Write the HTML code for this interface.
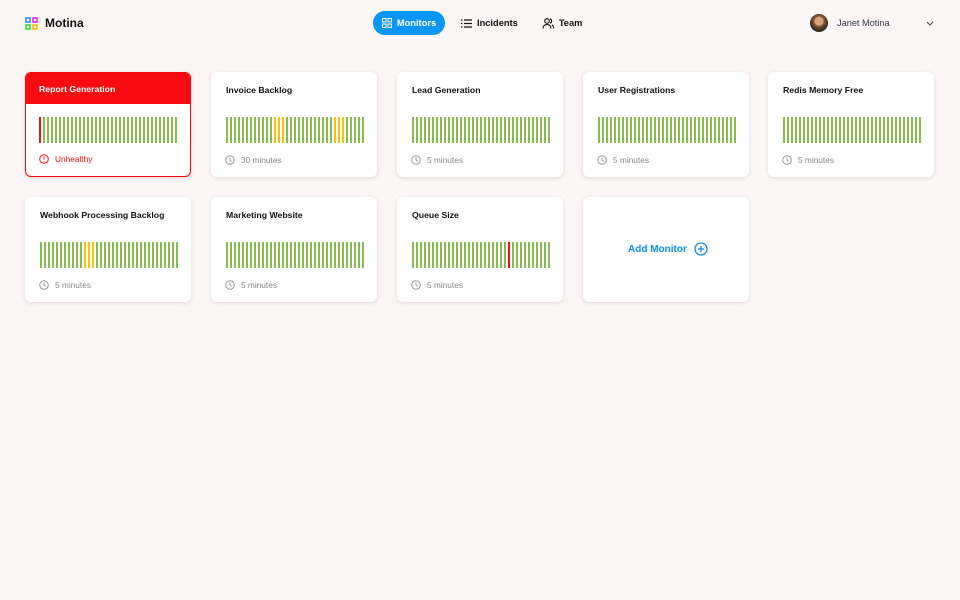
<!DOCTYPE html>
<html><head><meta charset="utf-8"><style>
*{box-sizing:border-box;margin:0;padding:0}
body{width:960px;height:600px;background:#fdf6f6;font-family:"Liberation Sans",sans-serif;position:relative;overflow:hidden;color:#111}
.logo{position:absolute;left:25px;top:16px;display:flex;align-items:center;gap:7px;font-weight:bold;font-size:12px}
.nav{position:absolute;top:11px;left:373px;display:flex;align-items:center;font-size:9.3px;font-weight:bold}
.nav .it{display:flex;align-items:center;gap:5px;height:24px;padding:0 10px;border-radius:12px}
.nav .act{background:#0a96f5;color:#fff;width:72px;justify-content:center;padding:0}
.user{position:absolute;left:810px;top:14px;display:flex;align-items:center;font-size:9.2px;color:#333a4a}
.av{width:18px;height:18px;border-radius:50%;background:radial-gradient(circle at 50% 40%,#d9a27a 0 4px,#8a5a3a 5px,#3a2d22 9px);margin-right:9px}
.card{position:absolute;width:166px;height:105px;background:#fff;border-radius:6px;box-shadow:0 1px 5px rgba(0,0,0,.12)}
.t{position:absolute;left:15px;top:13px;font-size:8.7px;font-weight:bold}
.bars{position:absolute;left:15px;top:45px;width:138px;height:26px;background:repeating-linear-gradient(90deg,#88bb50 0 2px,transparent 2px 4px)}
.bars i{position:absolute;top:0;width:2px;height:26px}
.y{background:#f5c20f}.r{background:#ee1111}
.f{position:absolute;left:14px;top:83px;font-size:8.3px;color:#888;display:flex;align-items:center;gap:6px}
.red{border:1.5px solid #ee0a0a}
.red .hd{position:absolute;left:0;top:0;right:0;height:31px;background:#f70a10;border-radius:5px 5px 0 0}
.red .t{color:#fff;top:11px;left:13px}
.red .bars{left:13px;top:44px}
.red .f{color:#e11;left:13px;top:81px}
</style></head><body>
<div class="logo"><svg width="13" height="13" viewBox="0 0 13 13" fill="none" stroke-width="1.5"><rect x="1" y="1" width="4" height="4" stroke="#1a8cff"/><rect x="8" y="1" width="4" height="4" stroke="#e81ce8"/><rect x="1" y="8" width="4" height="4" stroke="#22dd22"/><rect x="8" y="8" width="4" height="4" stroke="#ffaa00"/></svg>Motina</div>
<div class="nav">
<div class="it act"><svg width="10" height="10" viewBox="0 0 10 10" fill="none" stroke="#fff"><rect x=".5" y=".5" width="3.5" height="3.5"/><rect x="6" y=".5" width="3.5" height="3.5"/><rect x=".5" y="6" width="3.5" height="3.5"/><rect x="6" y="6" width="3.5" height="3.5"/></svg>Monitors</div>
<div class="it" style="margin-left:6px"><svg width="11" height="9" viewBox="0 0 11 9" stroke="#111" stroke-width="1.2"><path d="M0 1h1.5M3 1h8M0 4.5h1.5M3 4.5h8M0 8h1.5M3 8h8"/></svg>Incidents</div>
<div class="it" style="margin-left:4px"><svg width="12" height="11" viewBox="0 0 12 11" fill="none" stroke="#111" stroke-width="1.1"><circle cx="5" cy="3" r="2.3"/><path d="M1 10.5c0-2.5 1.8-4 4-4s4 1.5 4 4M8 .8a2.3 2.3 0 010 4.4M10 6.8c1 .7 1.5 2 1.5 3.7"/></svg>Team</div>
</div>
<div class="user"><div class="av"></div>Janet Motina<svg style="margin-left:36px" width="8" height="5" viewBox="0 0 8 5" fill="none" stroke="#444"><path d="M1 1l3 3 3-3"/></svg></div>

<div class="card red" style="left:25px;top:72px"><div class="hd"></div><div class="t">Report Generation</div><div class="bars"><i class="r" style="left:0"></i></div><div class="f"><svg width="10" height="10" viewBox="0 0 10 10" fill="none" stroke="#e11"><circle cx="5" cy="5" r="4.3"/><path d="M5 2.5v3M5 6.8v.7"/></svg>Unhealthy</div></div>

<div class="card" style="left:211px;top:72px"><div class="t">Invoice Backlog</div><div class="bars"><i class="y" style="left:48px"></i><i class="y" style="left:52px"></i><i class="y" style="left:56px"></i><i class="y" style="left:108px"></i><i class="y" style="left:112px"></i><i class="y" style="left:116px"></i></div><div class="f"><svg width="10" height="10" viewBox="0 0 10 10" fill="none" stroke="#999"><circle cx="5" cy="5" r="4.3"/><path d="M5 2.5V5l1.6 1.4"/></svg>30 minutes</div></div>

<div class="card" style="left:397px;top:72px"><div class="t">Lead Generation</div><div class="bars"></div><div class="f"><svg width="10" height="10" viewBox="0 0 10 10" fill="none" stroke="#999"><circle cx="5" cy="5" r="4.3"/><path d="M5 2.5V5l1.6 1.4"/></svg>5 minutes</div></div>

<div class="card" style="left:583px;top:72px"><div class="t">User Registrations</div><div class="bars"></div><div class="f"><svg width="10" height="10" viewBox="0 0 10 10" fill="none" stroke="#999"><circle cx="5" cy="5" r="4.3"/><path d="M5 2.5V5l1.6 1.4"/></svg>5 minutes</div></div>

<div class="card" style="left:768px;top:72px"><div class="t">Redis Memory Free</div><div class="bars"></div><div class="f"><svg width="10" height="10" viewBox="0 0 10 10" fill="none" stroke="#999"><circle cx="5" cy="5" r="4.3"/><path d="M5 2.5V5l1.6 1.4"/></svg>5 minutes</div></div>

<div class="card" style="left:25px;top:197px"><div class="t">Webhook Processing Backlog</div><div class="bars"><i class="y" style="left:44px"></i><i class="y" style="left:48px"></i><i class="y" style="left:52px"></i></div><div class="f"><svg width="10" height="10" viewBox="0 0 10 10" fill="none" stroke="#999"><circle cx="5" cy="5" r="4.3"/><path d="M5 2.5V5l1.6 1.4"/></svg>5 minutes</div></div>

<div class="card" style="left:211px;top:197px"><div class="t">Marketing Website</div><div class="bars"></div><div class="f"><svg width="10" height="10" viewBox="0 0 10 10" fill="none" stroke="#999"><circle cx="5" cy="5" r="4.3"/><path d="M5 2.5V5l1.6 1.4"/></svg>5 minutes</div></div>

<div class="card" style="left:397px;top:197px"><div class="t">Queue Size</div><div class="bars"><i class="r" style="left:96px"></i></div><div class="f"><svg width="10" height="10" viewBox="0 0 10 10" fill="none" stroke="#999"><circle cx="5" cy="5" r="4.3"/><path d="M5 2.5V5l1.6 1.4"/></svg>5 minutes</div></div>

<div class="card" style="left:583px;top:197px"><div style="position:absolute;left:45px;top:45px;display:flex;align-items:center;gap:7px;color:#0a8ef0;font-size:10px;font-weight:bold">Add Monitor<svg width="14" height="14" viewBox="0 0 14 14" fill="none" stroke="#0a8ef0" stroke-width="1.3"><circle cx="7" cy="7" r="6"/><path d="M7 4v6M4 7h6"/></svg></div></div>
</body></html>
